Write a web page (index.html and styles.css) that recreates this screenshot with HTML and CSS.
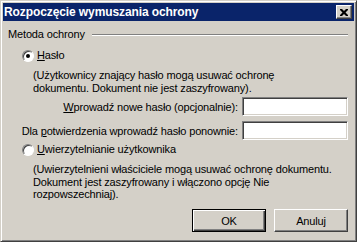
FILE: index.html
```html
<!DOCTYPE html>
<html lang="pl">
<head>
  <meta charset="UTF-8">
  <title>Rozpoczęcie wymuszania ochrony</title>
  <link rel="stylesheet" href="styles.css">
</head>
<body>

<div class="window">
  <div class="titlebar">
    <span class="title">Rozpoczęcie wymuszania ochrony</span>
    <span class="close-btn">
      <svg width="8" height="7" viewBox="0 0 8 7">
        <path d="M0 0h2l2 2 2-2h2v1l-2.5 2.5 2.5 2.5v1h-2l-2-2-2 2h-2v-1l2.5-2.5-2.5-2.5z" fill="#000"/>
      </svg>
    </span>
  </div>

  <div class="content">
    <div class="group-head">
      <span>Metoda ochrony</span>
      <span class="etched"></span>
    </div>

    <div class="option first">
      <span class="radio checked"></span>
      <span><u>H</u>asło</span>
    </div>
    <p class="note">(Użytkownicy znający hasło mogą usuwać ochronę<br>dokumentu. Dokument nie jest zaszyfrowany).</p>

    <div class="field-row top">
      <label><u>W</u>prowadź nowe hasło (opcjonalnie):</label>
      <span class="textbox"></span>
    </div>
    <div class="field-row">
      <label>Dla <u>p</u>otwierdzenia wprowadź hasło ponownie:</label>
      <span class="textbox"></span>
    </div>

    <div class="option second">
      <span class="radio"></span>
      <span><u>U</u>wierzytelnianie użytkownika</span>
    </div>
    <p class="note">(Uwierzytelnieni właściciele mogą usuwać ochronę dokumentu.<br>Dokument jest zaszyfrowany i włączono opcję Nie<br>rozpowszechniaj).</p>

    <div class="buttons">
      <span class="btn default">OK</span>
      <span class="btn">Anuluj</span>
    </div>
  </div>
</div>

</body>
</html>
```

FILE: styles.css
```css
body {
  margin: 0;
  font-family: 'Liberation Sans', Arial, sans-serif;
  font-size: 11px;
  letter-spacing: -0.15px;
  color: #000;
  background: #d4d0c8;
}

.window {
  width: 357px;
  height: 242px;
  box-sizing: border-box;
  background: #d4d0c8;
  border: 1px solid;
  border-color: #d4d0c8 #404040 #404040 #d4d0c8;
  box-shadow: inset 1px 1px #fff, inset -1px -1px #808080;
  padding: 2px;
  display: flex;
  flex-direction: column;
}

.titlebar {
  height: 18px;
  background: #0a246a;
  color: #fff;
  display: flex;
  align-items: center;
  justify-content: space-between;
  padding: 0 2px 0 1px;
}

.title {
  font-weight: bold;
  font-size: 12px;
  letter-spacing: -0.1px;
}

.close-btn {
  width: 16px;
  height: 14px;
  box-sizing: border-box;
  background: #d4d0c8;
  border: 1px solid;
  border-color: #fff #404040 #404040 #fff;
  box-shadow: inset -1px -1px #808080;
  display: flex;
  align-items: center;
  justify-content: center;
}

.content {
  flex: 1;
  padding: 7px 6px 0 5px;
  display: flex;
  flex-direction: column;
}

.group-head {
  display: flex;
  align-items: center;
  height: 13px;
  line-height: 13px;
}

.etched {
  flex: 1;
  height: 0;
  margin-left: 7px;
  border-top: 1px solid #808080;
  border-bottom: 1px solid #fff;
}

.option {
  display: flex;
  align-items: center;
  height: 13px;
  line-height: 13px;
  padding-left: 14px;
}

.option.first {
  margin-top: 8px;
}

.option.second {
  margin-top: 3px;
}

.radio {
  width: 12px;
  height: 12px;
  box-sizing: border-box;
  border-radius: 50%;
  background: #fff;
  border: 1px solid;
  border-color: #808080 #fff #fff #808080;
  box-shadow: inset 1px 1px #404040;
  margin-right: 3px;
  display: flex;
  align-items: center;
  justify-content: center;
}

.radio.checked::after {
  content: '';
  width: 4px;
  height: 4px;
  border-radius: 50%;
  background: #000;
}

.note {
  margin: 7px 0 0 25px;
  line-height: 12.5px;
}

.field-row {
  display: flex;
  justify-content: flex-end;
  align-items: center;
  gap: 4px;
  height: 19px;
  margin-top: 5px;
}

.field-row.top {
  margin-top: 3px;
}

.textbox {
  width: 106px;
  height: 19px;
  box-sizing: border-box;
  background: #fff;
  border: 1px solid;
  border-color: #808080 #fff #fff #808080;
  box-shadow: inset 1px 1px #404040, inset -1px -1px #d4d0c8;
}

.buttons {
  display: flex;
  justify-content: flex-end;
  gap: 8px;
  margin-top: auto;
  margin-bottom: 7px;
}

.btn {
  width: 74px;
  height: 23px;
  box-sizing: border-box;
  border: 1px solid;
  border-color: #fff #404040 #404040 #fff;
  box-shadow: inset -1px -1px #808080;
  display: flex;
  align-items: center;
  justify-content: center;
}

.btn.default {
  border: 1px solid #000;
  box-shadow: inset 1px 1px #fff, inset -1px -1px #404040, inset -2px -2px #808080;
}
```
